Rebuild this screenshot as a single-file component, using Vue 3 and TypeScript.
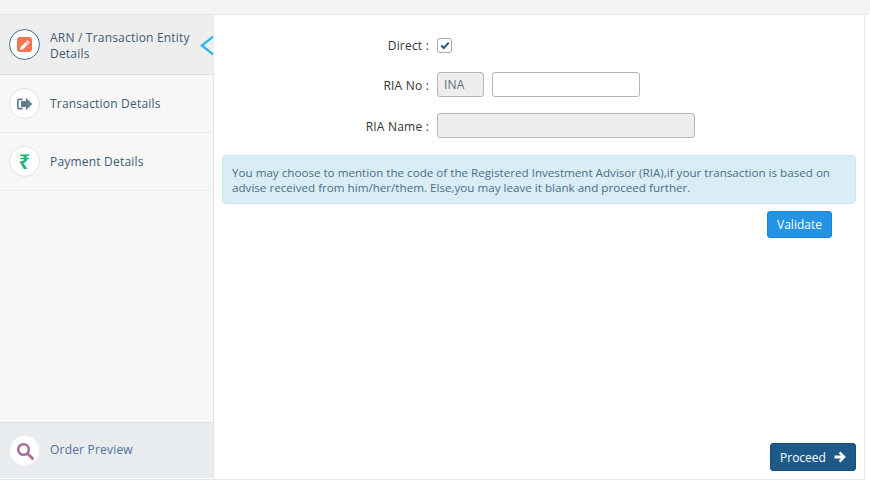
<script setup lang="ts">
const steps = [
  { label: 'Transaction Details', kind: 'exit' },
  { label: 'Payment Details', kind: 'rupee' },
]
</script>

<template>
  <div class="page">
    <div class="topbar"></div>
    <div class="card">
      <aside class="side">
        <div class="step active">
          <span class="circle ring">
            <span class="pencil">
              <svg viewBox="0 0 16 16" width="12" height="12"><path fill="#fff" d="M11.300 1.600l3.100 3.100-1.500 1.500-3.100-3.100zM8.900 4l3.100 3.100-6.700 6.700-3.900.9.800-4z"/></svg>
            </span>
          </span>
          <span class="step-label">ARN / Transaction Entity Details</span>
          <svg class="chevron" viewBox="0 0 15 22" width="14" height="21"><path d="M14 1.500L2 11l12 9.500" fill="none" stroke="#29b6ea" stroke-width="2.400"/></svg>
        </div>
        <div v-for="s in steps" :key="s.label" class="step">
          <span class="circle">
            <svg v-if="s.kind === 'exit'" viewBox="0 0 18 15" width="17" height="14"><path fill="#607d8b" d="M7 1.500H3.200C1.900 1.500 1 2.400 1 3.700v7.600c0 1.300.9 2.200 2.200 2.200H7v-1.900H3.600c-.5 0-.8-.3-.8-.8V4.200c0-.5.3-.8.800-.8H7z"/><path fill="#607d8b" d="M10.500 .8L17.300 7.500l-6.800 6.700v-3.600H5.200V4.400h5.300z"/></svg>
            <span v-else class="rupee">₹</span>
          </span>
          <span class="step-label">{{ s.label }}</span>
        </div>
        <div class="preview">
          <span class="circle plain">
            <svg viewBox="0 0 18 18" width="18" height="18"><circle cx="7.500" cy="7.500" r="5.300" fill="none" stroke="#a9709b" stroke-width="2.600"/><path d="M11.500 11.500l5 5" stroke="#a9709b" stroke-width="3" stroke-linecap="round"/></svg>
          </span>
          <span class="preview-label">Order Preview</span>
        </div>
      </aside>
      <main class="main">
        <div class="form">
          <div class="row direct">
            <label class="label">Direct :</label>
            <span class="check">
              <svg viewBox="0 0 12 10" width="10" height="9"><path d="M1.500 5l3 3 6-6.500" fill="none" stroke="#1f5c8a" stroke-width="2.400"/></svg>
            </span>
          </div>
          <div class="row ria-no">
            <label class="label">RIA No :</label>
            <input class="field prefix" value="INA" disabled />
            <input class="field code" />
          </div>
          <div class="row ria-name">
            <label class="label">RIA Name :</label>
            <input class="field name" disabled />
          </div>
        </div>
        <div class="alert">You may choose to mention the code of the Registered Investment Advisor (RIA),if your transaction is based on advise received from him/her/them. Else,you may leave it blank and proceed further.</div>
        <div class="validate-row"><button class="btn validate">Validate</button></div>
        <div class="proceed-row">
          <button class="btn proceed">Proceed
            <svg viewBox="0 0 14 14" width="12" height="12"><path fill="#fff" d="M7.500 .6l6.300 6.400-6.300 6.400-2-2 2.600-2.700H.6V5.300h7.500L5.500 2.600z"/></svg>
          </button>
        </div>
      </main>
    </div>
  </div>
</template>

<style>
html, body { margin: 0; background: #fff; }
</style>

<style scoped>
.page {
  width: 870px;
  height: 488px;
  background: #fff;
  font-family: "Open Sans", "Noto Sans", sans-serif;
  font-size: 12px;
  letter-spacing: 0.2px;
  overflow: hidden;
}
.topbar { height: 15px; background: #f4f4f4; }
.card {
  display: flex;
  width: 865px;
  height: 466px;
  border-right: 1px solid #e8e8e8;
  border-bottom: 1px solid #e8e8e8;
  border-top: 1px solid #e6e6e6;
  margin-top: -1px;
  box-sizing: border-box;
  background: #fff;
}
.side {
  width: 214px;
  flex: none;
  box-sizing: border-box;
  display: flex;
  flex-direction: column;
  background: #f7f7f7;
  border-right: 1px solid #e4e4e4;
  margin-bottom: 1px;
}
.step {
  height: 58px;
  flex: none;
  display: flex;
  align-items: center;
  gap: 10px;
  padding-left: 9px;
  border-bottom: 1px solid #ececec;
  box-sizing: border-box;
  color: #3d5a73;
  position: relative;
}
.step.active {
  height: 60px;
  background: #eeeeee;
  border-bottom: 1px solid #dddddd;
  margin-right: -1px;
}
.step-label { line-height: 16px; width: 146px; }
.step.active .step-label { padding-top: 3px; }
.circle {
  width: 31px;
  height: 31px;
  flex: none;
  border-radius: 50%;
  background: #fff;
  border: 1px solid #e2e2e2;
  display: flex;
  align-items: center;
  justify-content: center;
  box-sizing: border-box;
}
.circle.ring { border-color: #3f6f92; }
.circle.plain { border-color: #f0f0f0; }
.pencil {
  width: 15px;
  height: 15px;
  border-radius: 3px;
  background: #f9754f;
  display: flex;
  align-items: center;
  justify-content: center;
}
.rupee {
  color: #1fb47c;
  font-family: "Noto Sans", "DejaVu Sans", sans-serif;
  font-size: 20px;
  font-weight: 700;
  letter-spacing: 0;
  line-height: 1;
}
.chevron { position: absolute; right: 0; top: 20px; }
.preview {
  margin-top: auto;
  height: 56px;
  display: flex;
  align-items: center;
  gap: 10px;
  padding-left: 9px;
  background: #e9ecee;
  border-top: 1px solid #dfdfdf;
  box-sizing: border-box;
}
.preview-label { color: #4f7199; padding-bottom: 2px; }
.main {
  flex: 1;
  display: flex;
  flex-direction: column;
  padding: 0 8px 7px;
  min-width: 0;
}
.form { padding-top: 18px; }
.row { display: flex; align-items: center; gap: 8px; }
.direct { height: 24px; }
.ria-no { margin-top: 15px; height: 25px; }
.ria-name { margin-top: 16px; height: 25px; }
.label {
  width: 207px;
  flex: none;
  text-align: right;
  color: #333;
}
.ria-no .label, .ria-name .label { padding-top: 1px; }
.check {
  width: 15px;
  height: 15px;
  border: 1px solid #a9a9a9;
  border-radius: 3px;
  box-sizing: border-box;
  background: #fff;
  display: flex;
  align-items: center;
  justify-content: center;
}
.field {
  height: 25px;
  box-sizing: border-box;
  border: 1px solid #b5b5b5;
  border-radius: 3px;
  background: #fff;
  padding: 0 6px;
  font: inherit;
  letter-spacing: inherit;
  outline: none;
  color: #5a6f80;
}
.field:disabled { background: #eeeeee; opacity: 1; color: #5a6f80; }
.prefix { width: 47px; }
.code { width: 148px; }
.name { width: 258px; }
.alert {
  margin-top: 17px;
  height: 49px;
  box-sizing: border-box;
  padding: 9px 9px;
  font-size: 11.63px;
  line-height: 15px;
  letter-spacing: 0;
  background: #d9edf7;
  border: 1px solid #c9e6f3;
  border-radius: 4px;
  color: #4a6e85;
  width: 634px;
}
.validate-row { display: flex; justify-content: flex-end; padding: 7px 24px 0 0; }
.btn {
  font: inherit;
  letter-spacing: 0;
  color: #fff;
  border-radius: 3px;
  box-sizing: border-box;
  cursor: pointer;
}
.validate {
  width: 65px;
  height: 27px;
  padding: 0;
  background: #2393e6;
  border: 1px solid #1d85d2;
}
.proceed-row { margin-top: auto; padding-bottom: 1px; display: flex; justify-content: flex-end; }
.proceed {
  width: 86px;
  height: 28px;
  padding: 0;
  background: #1d5a8a;
  border: 1px solid #184d78;
  display: flex;
  align-items: center;
  justify-content: center;
  gap: 8px;
}
</style>
